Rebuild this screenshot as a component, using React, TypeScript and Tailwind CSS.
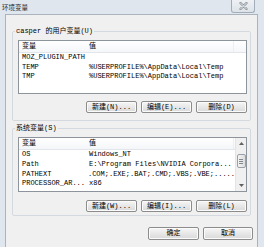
import React from "react";

const F = "font-['Liberation_Mono','Noto_Sans_CJK_SC',monospace]";

function Btn({ children, w = "w-[51px]", h = "h-[12px]" }: { children: React.ReactNode; w?: string; h?: string }) {
  return (
    <div
      className={`${w} ${h} flex items-center justify-center rounded-[2px] border border-[#8c8c8c] bg-gradient-to-b from-[#f6f6f6] to-[#d9d9d9] shadow-[inset_0_0_0_1px_#fbfbfb] text-[7px] leading-none text-[#000] ${F}`}
    >
      {children}
    </div>
  );
}

function Header() {
  return (
    <div className="h-[12px] flex items-center bg-gradient-to-b from-[#ffffff] to-[#f4f6f9] border-b border-[#e2e5e9] text-[7px] leading-none text-[#000]">
      <div className="w-[68px] pl-[3px] h-full flex items-center">变量</div>
      <div className="w-[147px] pl-[2px] h-full flex items-center border-r border-[#eceef0]">值</div>
    </div>
  );
}

function Row({ name, value, h }: { name: string; value: string; h: string }) {
  return (
    <div className={`${h} flex items-center text-[7px] leading-none text-[#000] whitespace-nowrap`}>
      <div className="w-[68px] pl-[3px]">{name}</div>
      <div className="pl-[2px]">{value}</div>
    </div>
  );
}

export default function App() {
  return (
    <div className={`w-[264px] h-[247px] bg-[#dfe6ee] flex flex-col overflow-hidden relative ${F}`}>
      <div className="h-[14px] flex items-center pl-[2px] text-[6.5px] leading-none text-[#1e1e1e] font-['Noto_Sans_CJK_SC',sans-serif]">
        环境变量
      </div>
      <div className="absolute right-[9px] top-0 w-[24px] h-[13px] rounded-b-[3px] border border-t-0 border-[#a3adb8] bg-gradient-to-b from-[#eef1f4] to-[#dde3e9] flex items-center justify-center">
        <svg width="9" height="8" viewBox="0 0 9 8">
          <path d="M1.5 1 L7.5 7 M7.5 1 L1.5 7" stroke="#8d949c" strokeWidth="2.4" strokeLinecap="round" />
          <path d="M1.5 1 L7.5 7 M7.5 1 L1.5 7" stroke="#f4f5f6" strokeWidth="0.9" strokeLinecap="round" />
        </svg>
      </div>

      <div className="flex-1 ml-[5px] mr-[6px] bg-[#f0f0f0] border-l border-t border-r border-[#aab3be] flex flex-col">
        {/* User variables */}
        <fieldset className="mt-[11.5px] mx-[6px] border border-[#d3d9df] rounded-[2px] pb-[7px]">
          <legend className="ml-[2px] px-[1px] text-[7px] leading-[9px] text-[#000]">casper 的用户变量(U)</legend>
          <div className="mt-[4.5px] ml-[5px] w-[229px] h-[54px] border border-[#8e949c] bg-white flex flex-col">
            <Header />
            <Row h="h-[9.5px]" name="MOZ_PLUGIN_PATH" value="" />
            <Row h="h-[9.5px]" name="TEMP" value="%USERPROFILE%\AppData\Local\Temp" />
            <Row h="h-[9.5px]" name="TMP" value="%USERPROFILE%\AppData\Local\Temp" />
          </div>
          <div className="mt-[7px] flex justify-end gap-[4px] pr-[3px]">
            <Btn>新建(N)...</Btn>
            <Btn>编辑(E)...</Btn>
            <Btn>删除(D)</Btn>
          </div>
        </fieldset>

        {/* System variables */}
        <fieldset className="mt-[2.5px] mx-[6px] border border-[#d3d9df] rounded-[2px] pb-[3px]">
          <legend className="ml-[2px] px-[1px] text-[7px] leading-[9px] text-[#000]">系统变量(S)</legend>
          <div className="mt-[4.5px] ml-[5px] w-[229px] h-[55px] border border-[#8e949c] bg-white flex">
            <div className="flex-1 flex flex-col overflow-hidden">
              <Header />
              <Row h="h-[9.7px]" name="OS" value="Windows_NT" />
              <Row h="h-[9.7px]" name="Path" value="E:\Program Files\NVIDIA Corpora..." />
              <Row h="h-[9.7px]" name="PATHEXT" value=".COM;.EXE;.BAT;.CMD;.VBS;.VBE;....." />
              <Row h="h-[9.7px]" name="PROCESSOR_AR..." value="x86" />
            </div>
            <div className="w-[11px] bg-[#f0f0f0] border-l border-[#e4e4e4] flex flex-col items-center">
              <div className="h-[11px] w-full flex items-center justify-center">
                <svg width="5" height="3" viewBox="0 0 5 3"><path d="M0 3 L2.5 0 L5 3 Z" fill="#606060" /></svg>
              </div>
              <div className="mt-[5px] h-[14px] w-[9px] rounded-[2px] border border-[#9aa0a8] bg-gradient-to-r from-[#f4f4f4] to-[#dcdcdc] flex flex-col items-center justify-center gap-[1px]">
                <div className="w-[4px] h-px bg-[#808890]" />
                <div className="w-[4px] h-px bg-[#808890]" />
                <div className="w-[4px] h-px bg-[#808890]" />
              </div>
              <div className="flex-1" />
              <div className="h-[11px] w-full flex items-center justify-center">
                <svg width="5" height="3" viewBox="0 0 5 3"><path d="M0 0 L2.5 3 L5 0 Z" fill="#606060" /></svg>
              </div>
            </div>
          </div>
          <div className="mt-[8px] flex justify-end gap-[4px] pr-[3px]">
            <Btn>新建(W)...</Btn>
            <Btn>编辑(I)...</Btn>
            <Btn>删除(L)</Btn>
          </div>
        </fieldset>

        <div className="mt-[11px] flex justify-end gap-[4px] pr-[4px]">
          <Btn h="h-[13px]">确定</Btn>
          <Btn h="h-[13px]" w="w-[50px]">取消</Btn>
        </div>
      </div>
    </div>
  );
}
